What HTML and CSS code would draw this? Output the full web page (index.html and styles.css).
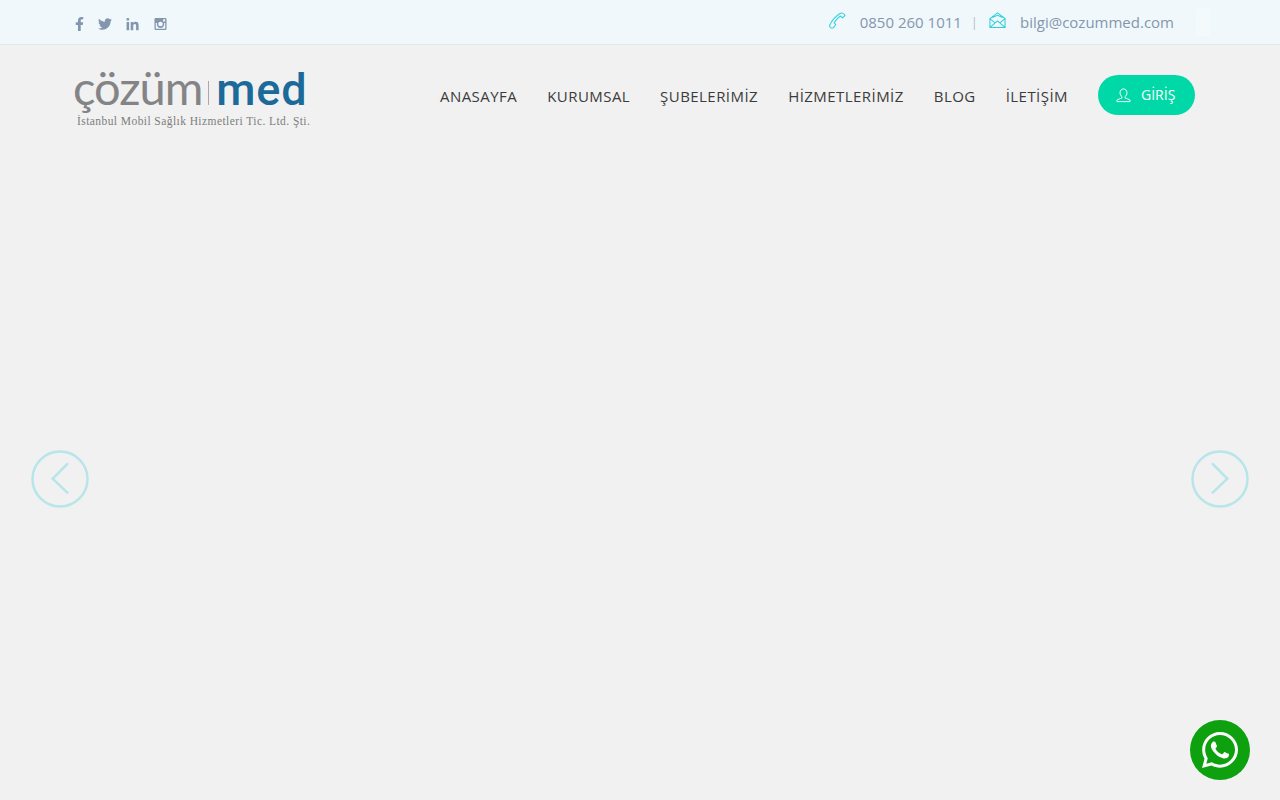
FILE: index.html
```html
<!DOCTYPE html>
<html lang="tr">
<head>
  <meta charset="UTF-8" />
  <meta name="viewport" content="width=device-width, initial-scale=1.0"/>
  <title>Çözüm Med</title>
  <link rel="stylesheet" href="styles.css">
</head>
<body>
  <div class="topbar">
    <div class="social">
      <a href="#" class="fb"><svg viewBox="0 0 320 512"><path d="M279.14 288l14.22-92.66h-88.91v-60.13c0-25.35 12.42-50.06 52.24-50.06h40.42V6.26S260.43 0 225.36 0c-73.22 0-121.08 44.38-121.08 124.72v70.62H22.89V288h81.39v224h100.17V288z"/></svg></a>
      <a href="#" class="tw"><svg viewBox="0 0 512 512"><path d="M459.37 151.716c.325 4.548.325 9.097.325 13.645 0 138.72-105.583 298.558-298.558 298.558-59.452 0-114.68-17.219-161.137-47.106 8.447.974 16.568 1.299 25.34 1.299 49.055 0 94.213-16.568 130.274-44.832-46.132-.975-84.792-31.188-98.112-72.772 6.498.974 12.995 1.624 19.818 1.624 9.421 0 18.843-1.3 27.614-3.573-48.081-9.747-84.143-51.98-84.143-102.985v-1.299c13.969 7.797 30.214 12.67 47.431 13.319-28.264-18.843-46.781-51.005-46.781-87.391 0-19.492 5.197-37.36 14.294-52.954 51.655 63.675 129.3 105.258 216.365 109.807-1.624-7.797-2.599-15.918-2.599-24.04 0-57.828 46.782-104.934 104.934-104.934 30.213 0 57.502 12.67 76.67 33.137 23.715-4.548 46.456-13.32 66.599-25.34-7.798 24.366-24.366 44.833-46.132 57.827 21.117-2.273 41.584-8.122 60.426-16.243-14.292 20.791-32.161 39.308-52.628 54.253z"/></svg></a>
      <a href="#" class="in"><svg viewBox="0 0 448 512"><path d="M100.28 480H7.4V180.9h92.88zM53.79 140.1C24.09 140.1 0 115.5 0 85.8a53.79 53.79 0 0 1 107.58 0c0 29.7-24.1 54.3-53.79 54.3zM447.9 480h-92.68V334.4c0-34.7-.7-79.2-48.29-79.2-48.29 0-55.69 37.7-55.69 76.7V480h-92.78V180.9h89.08v40.8h1.3c12.4-23.5 42.69-48.3 87.88-48.3 94 0 111.28 61.9 111.28 142.3V480z"/></svg></a>
      <a href="#" class="ig"><svg viewBox="0 0 14 14"><path fill-rule="evenodd" d="M2 .5h10A1.500 1.500 0 0 1 13.500 2v10a1.500 1.500 0 0 1-1.500 1.500H2A1.500 1.500 0 0 1 .5 12V2A1.500 1.500 0 0 1 2 .5zM9.800 2v2.200H12V2zM1.900 6v5.500c0 .4.200.6.600.6h9c.4 0 .6-.2.6-.6V6h-1.300a4 4 0 1 1-7.600 0zM7 4.500a2.500 2.500 0 1 0 0 5 2.500 2.500 0 0 0 0-5z"/></svg></a>
    </div>
    <div class="contact">
      <svg class="contact-icon" viewBox="0 0 18 18"><path d="M1.500 16.500c-1-1-1-2.200-.3-3.400C3 9.500 7.500 4.200 11.300 1.800c1.300-.8 2.600-1 3.700-.3 1 .6 1.800 1.500 2 2.300l-2.700 2.300-2.200-1.800C9.500 5.800 7 8.800 5.500 11.500l1.600 1.700-2.500 3.500c-1 .4-2.200.4-3.100-.2z"/></svg>
      <span class="phone">0850 260 1011</span>
      <span class="sep">|</span>
      <svg class="contact-icon" viewBox="0 0 18 18"><path d="M1 7l8-6 8 6v9.500H1zM1 7l5.500 4.500L9 9.500l2.500 2L17 7M1 16.500l5.500-5M17 16.500l-5.500-5M3.500 5.800L9 3.500l5.500 2.300"/></svg>
      <span class="mail">bilgi@cozummed.com</span>
      <span class="lang-box"></span>
    </div>
  </div>

  <header class="header">
    <a href="#" class="logo">
      <span class="logo-main"><span class="logo-grey">çözüm</span><span class="logo-line"></span><span class="logo-blue">med</span></span>
      <span class="logo-sub">İstanbul Mobil Sağlık Hizmetleri Tic. Ltd. Şti.</span>
    </a>
    <nav class="menu">
      <a href="#">Anasayfa</a>
      <a href="#">Kurumsal</a>
      <a href="#">Şubelerİmİz</a>
      <a href="#">Hİzmetlerİmİz</a>
      <a href="#">Blog</a>
      <a href="#">İletİşİm</a>
      <a href="#" class="btn-login">
        <svg viewBox="0 0 16 16"><path d="M8 1c2.300 0 3.700 1.700 3.700 4 0 1.800-.8 3.400-2 4.200v1.500c1.700.6 4.300 1.300 5.300 2.300v1.500H1V13c1-1 3.600-1.700 5.300-2.300V9.200c-1.200-.8-2-2.400-2-4.200C4.300 2.700 5.700 1 8 1z"/></svg>
        <span>GİRİŞ</span>
      </a>
    </nav>
  </header>

  <a href="#" class="arrow arrow-prev"><svg viewBox="0 0 58 58"><circle cx="29" cy="29" r="27.500"/><path d="M36.300 14L21.700 28.700l14.600 14"/></svg></a>
  <a href="#" class="arrow arrow-next"><svg viewBox="0 0 58 58"><circle cx="29" cy="29" r="27.500"/><path d="M21.700 14l14.600 14.700-14.600 14"/></svg></a>

  <a href="#" class="whatsapp"><svg viewBox="0 32 448 448"><path d="M380.900 97.100C339 55.100 283.200 32 223.900 32c-122.400 0-222 99.600-222 222 0 39.100 10.200 77.300 29.600 111L0 480l117.700-30.900c32.400 17.700 68.900 27 106.100 27h.1c122.300 0 224.100-99.600 224.100-222 0-59.300-25.200-115-67.100-157zm-157 341.600c-33.200 0-65.700-8.900-94-25.700l-6.700-4-69.800 18.300L72 359.200l-4.400-7c-18.500-29.400-28.200-63.300-28.200-98.200 0-101.700 82.800-184.500 184.600-184.500 49.300 0 95.600 19.200 130.400 54.100 34.800 34.900 56.200 81.200 56.100 130.500 0 101.800-84.900 184.600-186.600 184.600zm101.200-138.200c-5.500-2.800-32.800-16.200-37.900-18-5.100-1.900-8.800-2.800-12.500 2.800-3.700 5.600-14.300 18-17.600 21.800-3.200 3.700-6.500 4.200-12 1.400-32.600-16.300-54-29.100-75.500-66-5.700-9.800 5.700-9.100 16.300-30.300 1.800-3.700.9-6.900-.5-9.700-1.400-2.800-12.500-30.100-17.100-41.200-4.500-10.800-9.100-9.300-12.500-9.500-3.200-.2-6.900-.2-10.600-.2-3.700 0-9.700 1.400-14.800 6.900-5.100 5.600-19.400 19-19.400 46.300 0 27.300 19.900 53.700 22.600 57.400 2.800 3.700 39.100 59.700 94.800 83.800 35.200 15.200 49 16.500 66.600 13.900 10.700-1.600 32.800-13.400 37.400-26.400 4.600-13 4.600-24.100 3.200-26.400-1.300-2.500-5-3.900-10.500-6.600z"/></svg></a>
</body>
</html>
```

FILE: styles.css
```css
* {
  margin: 0;
  padding: 0;
  box-sizing: border-box;
  font-family: 'Open Sans', sans-serif;
}

html, body {
  height: 100%;
  overflow: hidden;
}

body {
  background: #f1f1f1;
  position: relative;
}

a {
  text-decoration: none;
}

.topbar {
  height: 45px;
  background: #f0f8fb;
  border-bottom: 1px solid #dfe9ed;
  display: flex;
  justify-content: space-between;
  padding: 0 70px 0 75px;
}

.social {
  display: flex;
  align-items: center;
  padding-top: 4px;
}

.social a {
  display: block;
  height: 14px;
  margin-right: 14px;
}

.social svg {
  display: block;
  height: 14px;
  fill: #8496ae;
}

.social .fb svg { width: 9px; }
.social .tw svg { width: 14px; }
.social .in svg { width: 13px; }
.social .ig svg { width: 13px; }
.social .in { margin-right: 15px; }

.contact {
  display: flex;
  align-items: center;
  font-size: 15px;
  color: #8496ae;
}

.contact-icon {
  width: 17px;
  height: 17px;
  margin-top: -3px;
  fill: none;
  stroke: #2fd0dc;
  stroke-width: 1.100;
}

.phone {
  margin-left: 14px;
}

.sep {
  margin: 0 11px 0 9px;
  font-size: 13px;
  color: #b4bfcc;
}

.mail {
  margin-left: 14px;
}

.lang-box {
  width: 14px;
  height: 28px;
  margin-left: 22px;
  background: #f4fafc;
  border-radius: 2px;
}

.header {
  display: flex;
  justify-content: space-between;
  padding: 28px 85px 0 75px;
}

.logo {
  display: flex;
  flex-direction: column;
  width: 236px;
}

.logo-main {
  display: flex;
  align-items: baseline;
  height: 40px;
  margin-left: -2px;
  line-height: 28px;
}

.logo-grey {
  font-family: 'Lato', sans-serif;
  font-size: 47px;
  font-weight: 400;
  color: #848486;
  letter-spacing: -1px;
}

.logo-line {
  width: 1px;
  height: 24px;
  margin: 0 7px 0 6px;
  background: #a9a9a9;
}

.logo-blue {
  font-family: 'Roboto', sans-serif;
  font-size: 45px;
  font-weight: 500;
  color: #1b6a99;
  letter-spacing: 0.800px;
}

.logo-sub {
  margin-top: 1px;
  padding-left: 2px;
  font-family: 'Liberation Serif', serif;
  font-size: 11.500px;
  line-height: 14px;
  letter-spacing: 0.430px;
  color: #7d7d7d;
  white-space: nowrap;
}

.menu {
  display: flex;
  align-items: flex-start;
  gap: 30px;
  padding-top: 2px;
}

.menu a {
  font-size: 15px;
  line-height: 42px;
  letter-spacing: 0.450px;
  color: #3b3b3b;
  text-transform: uppercase;
}

.menu .btn-login {
  display: flex;
  align-items: center;
  gap: 10px;
  width: 97px;
  height: 40px;
  padding-left: 18px;
  border-radius: 20px;
  background: #00d9a7;
  color: #fff;
  font-size: 14px;
  letter-spacing: 0;
}

.btn-login svg {
  width: 15px;
  height: 15px;
  fill: none;
  stroke: #fff;
  stroke-width: 1;
}

.arrow {
  position: absolute;
  top: 450px;
  width: 58px;
  height: 58px;
}

.arrow-prev { left: 31px; }
.arrow-next { right: 31px; }

.arrow svg {
  display: block;
  fill: none;
  stroke: #b7e5ea;
  stroke-width: 2.500;
  stroke-linecap: round;
  overflow: visible;
}

.whatsapp {
  position: fixed;
  right: 30px;
  bottom: 20px;
  width: 60px;
  height: 60px;
  display: flex;
  align-items: center;
  justify-content: center;
  border-radius: 50%;
  background: #0da10f;
}

.whatsapp svg {
  width: 36px;
  height: 36px;
  fill: #fff;
}
```
